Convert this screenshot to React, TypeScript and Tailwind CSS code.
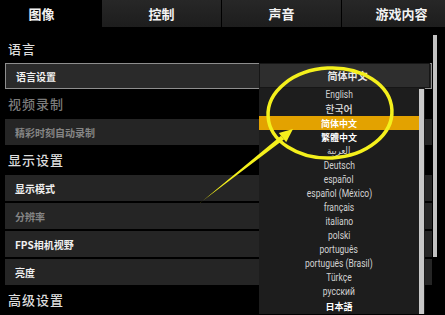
import type { ReactNode } from "react";

const tabs = ["图像", "控制", "声音", "游戏内容"];

const languages: { label: string; cjk?: boolean; active?: boolean }[] = [
	{ label: "English" },
	{ label: "한국어", cjk: true },
	{ label: "简体中文", cjk: true, active: true },
	{ label: "繁體中文", cjk: true },
	{ label: "العربية" },
	{ label: "Deutsch" },
	{ label: "español" },
	{ label: "español (México)" },
	{ label: "français" },
	{ label: "italiano" },
	{ label: "polski" },
	{ label: "português" },
	{ label: "português (Brasil)" },
	{ label: "Türkçe" },
	{ label: "русский" },
	{ label: "日本語", cjk: true },
];

function SectionTitle({ children, dim, first }: { children: ReactNode; dim?: boolean; first?: boolean }) {
	return (
		<div
			className={`flex items-center pl-[3px] text-[13px] font-medium tracking-[1px] ${
				first ? "h-[36px] pt-[8px]" : "h-[30px]"
			} ${dim ? "text-[#7c7c7c]" : "text-[#dedede]"}`}
		>
			{children}
		</div>
	);
}

function SettingRow({ children, dim, selected }: { children: ReactNode; dim?: boolean; selected?: boolean }) {
	return (
		<div
			className={`flex h-[26px] items-center pl-[10px] text-[10px] font-bold ${
				selected ? "border border-[#8e8e8e] bg-[#2a2a2a] pl-[9px]" : "bg-[#252525]"
			} ${dim ? "text-[#858585]" : "text-[#f0f0f0]"}`}
		>
			{children}
		</div>
	);
}

export default function App() {
	return (
		<div className="relative h-[315px] w-[445px] overflow-hidden bg-black font-['Noto_Sans_CJK_SC',sans-serif] text-white">
			{/* tabs */}
			<div className="-ml-[18px] flex h-[27px]">
				{tabs.map((t, i) => (
					<div
						key={t}
						className={`flex w-[120px] shrink-0 items-center justify-center border-r border-black text-[13px] font-bold text-[#f2f2f2] ${
							i === 0 ? "bg-black" : "bg-gradient-to-b from-[#272727] to-[#1d1d1d]"
						}`}
					>
						{t}
					</div>
				))}
			</div>

			{/* settings list */}
			<div className="flex">
				<div className="ml-[5px] flex w-[427px] flex-col">
					<SectionTitle first>语言</SectionTitle>
					<SettingRow selected>语言设置</SettingRow>
					<SectionTitle dim>视频录制</SectionTitle>
					<SettingRow dim>精彩时刻自动录制</SettingRow>
					<SectionTitle>显示设置</SectionTitle>
					<div className="flex flex-col gap-[2px]">
						<SettingRow>显示模式</SettingRow>
						<SettingRow dim>分辨率</SettingRow>
						<SettingRow>FPS相机视野</SettingRow>
						<SettingRow>亮度</SettingRow>
					</div>
					<SectionTitle>高级设置</SectionTitle>
				</div>
				<div className="ml-[1px] w-[4px]">
					<div className="mt-[8px] h-[222px] bg-[#c2c2c2]" />
				</div>
			</div>

			{/* open dropdown */}
			<div className="absolute left-[259px] top-[63px] w-[171px]">
				<div className="flex h-[25px] items-center justify-center border border-[#161616] bg-[#2e2e2e] pl-[6px] text-[10px] font-bold text-[#e8e8e8]">
					简体中文
				</div>
				<div className="flex w-[166px] bg-[#1d1d1d]">
					<div className="flex w-[160px] flex-col">
						{languages.map((l) => (
							<div
								key={l.label}
								className={`flex h-[14.1px] items-center justify-center leading-none ${
									l.active ? "bg-[#e3a200]" : ""
								}`}
							>
								{l.cjk ? (
									<span
										className={`font-['Noto_Sans_CJK_SC','Noto_Sans_CJK_KR',sans-serif] ${
											l.label === "한국어"
												? "text-[10px] font-medium text-[#dedede]"
												: "text-[9px] font-bold text-white"
										}`}
									>
										{l.label}
									</span>
								) : (
									<span className="inline-block scale-x-[0.85] whitespace-nowrap font-['Roboto','DejaVu_Sans',sans-serif] text-[10px] text-[#d2d2d2]">
										{l.label}
									</span>
								)}
							</div>
						))}
					</div>
					<div className="mt-[1px] w-[5px] bg-[#c8c8c8]" />
				</div>
			</div>

			{/* annotation */}
			<svg className="pointer-events-none absolute inset-0" width="445" height="315" viewBox="0 0 445 315">
				<ellipse
					cx="330"
					cy="113"
					rx="62"
					ry="45"
					transform="rotate(-3 330 113)"
					fill="none"
					stroke="#f4f01c"
					strokeWidth="3.5"
				/>
				<polygon points="199.5,203.6 200.5,202.4 284.2,139.3 281.0,135.7" fill="#f4f01c" />
				<polygon points="293,129 286.2,142.2 278.8,133.0" fill="#f4f01c" />
			</svg>
		</div>
	);
}
